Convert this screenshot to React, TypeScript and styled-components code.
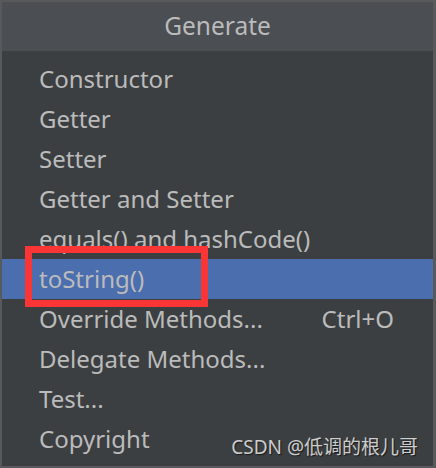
import React from "react";
import styled, { createGlobalStyle } from "styled-components";

const Global = createGlobalStyle`
  html, body { margin: 0; padding: 0; background: #58595b; }
  body { font-family: "Noto Sans", "Open Sans", sans-serif; }
`;

const Frame = styled.div`
  position: relative;
  width: 436px;
  height: 468px;
  box-sizing: border-box;
  border-style: solid;
  border-color: #58595b;
  border-width: 2px 3px 2px 2px;
  background: #3c3f41;
  display: flex;
  flex-direction: column;
  overflow: hidden;
`;

const Header = styled.div`
  height: 49px;
  background: #4b4e52;
  color: #bbbbbb;
  font-size: 24.5px;
  display: flex;
  align-items: center;
  justify-content: center;
  padding-bottom: 2px;
  box-sizing: border-box;
`;

const List = styled.div`
  padding-top: 8px;
  display: flex;
  flex-direction: column;
`;

const Row = styled.div<{ $selected?: boolean }>`
  height: 40px;
  display: flex;
  align-items: center;
  padding-left: 37px;
  padding-right: 39px;
  padding-bottom: 2px;
  box-sizing: border-box;
  font-size: 24px;
  color: #bbbbbb;
  background: ${(p) => (p.$selected ? "#4b6eaf" : "transparent")};
`;

const Label = styled.span`
  flex: 1;
  white-space: nowrap;
`;

const Shortcut = styled.span`
  white-space: nowrap;
`;

const Annotation = styled.div`
  position: absolute;
  left: 23px;
  top: 244px;
  width: 183px;
  height: 61px;
  box-sizing: border-box;
  border: 7px solid #fa3535;
`;

const Watermark = styled.div`
  position: absolute;
  right: 15px;
  bottom: 6px;
  font-family: "Noto Sans", "Noto Sans CJK SC", sans-serif;
  font-size: 19px;
  color: rgba(235, 235, 235, 0.85);
  text-shadow: 1px 1px 1px rgba(0, 0, 0, 0.6);
  white-space: nowrap;
`;

const items: { label: string; shortcut?: string; selected?: boolean }[] = [
  { label: "Constructor" },
  { label: "Getter" },
  { label: "Setter" },
  { label: "Getter and Setter" },
  { label: "equals() and hashCode()" },
  { label: "toString()", selected: true },
  { label: "Override Methods...", shortcut: "Ctrl+O" },
  { label: "Delegate Methods..." },
  { label: "Test..." },
  { label: "Copyright" },
];

export default function App() {
  return (
    <>
      <Global />
      <Frame>
        <Header>Generate</Header>
        <List>
          {items.map((it) => (
            <Row key={it.label} $selected={it.selected}>
              <Label>{it.label}</Label>
              {it.shortcut && <Shortcut>{it.shortcut}</Shortcut>}
            </Row>
          ))}
        </List>
        <Annotation />
        <Watermark>CSDN @低调的根儿哥</Watermark>
      </Frame>
    </>
  );
}
